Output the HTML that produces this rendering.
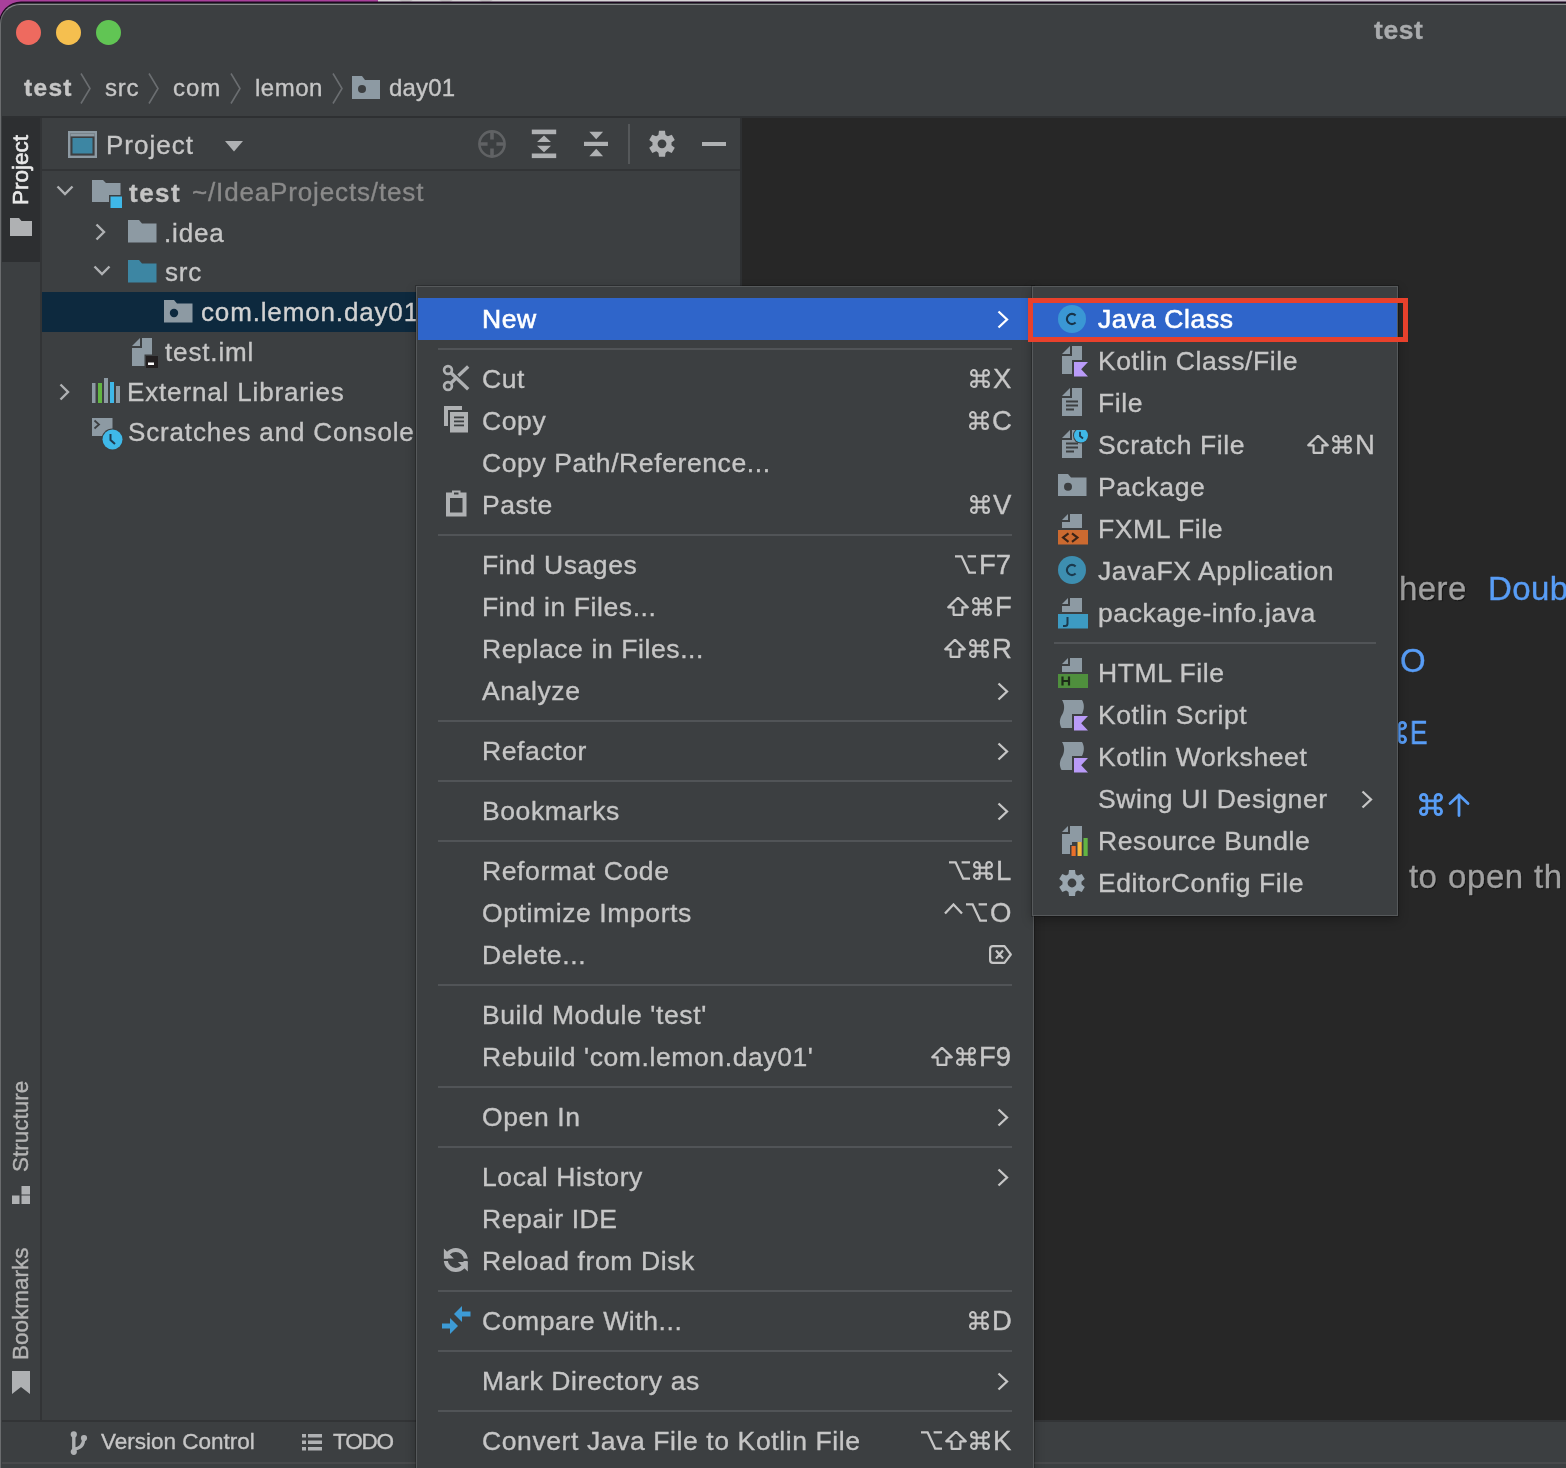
<!DOCTYPE html>
<html><head><meta charset="utf-8"><style>
html,body{margin:0;padding:0;width:1566px;height:1468px;overflow:hidden;background:#3c3f41}
.t{position:absolute;white-space:nowrap;font-family:"Liberation Sans", sans-serif;-webkit-text-stroke:0.35px currentColor;will-change:transform}
.r{position:absolute;display:block}
</style></head><body>
<div class="r" style="left:0px;top:0px;width:378px;height:40px;background:#a8409b;"></div><div class="r" style="left:378px;top:0px;width:912px;height:6px;background:#d9d5d8;"></div><div class="r" style="left:397px;top:-15px;width:18px;height:18px;border-radius:50%;background:#c2bec1"></div><div class="r" style="left:437px;top:-15px;width:18px;height:18px;border-radius:50%;background:#c2bec1"></div><div class="r" style="left:477px;top:-15px;width:18px;height:18px;border-radius:50%;background:#c2bec1"></div><div class="r" style="left:1290px;top:0px;width:276px;height:6px;background:#c8bccb;"></div><div class="r" style="left:0;top:3px;width:1620px;height:1500px;background:#3c3f41;border-radius:21px 0 0 0;box-shadow:0 -0.5px 0 1px #1d0a20"></div><div class="r" style="left:0;top:4px;width:1620px;height:1500px;box-sizing:border-box;border-radius:20px 0 0 0;border-top:1.6px solid #8d8f91;border-left:1.8px solid #6a6c6e"></div><div class="r" style="left:15.5px;top:19.799999999999997px;width:25px;height:25px;border-radius:50%;background:#ee6a5f"></div><div class="r" style="left:55.5px;top:19.799999999999997px;width:25px;height:25px;border-radius:50%;background:#f5bf4f"></div><div class="r" style="left:95.5px;top:19.799999999999997px;width:25px;height:25px;border-radius:50%;background:#61c554"></div><div class="t" style="left:1374px;top:17.27px;font-size:26.5px;line-height:26.5px;color:#a9abad;font-weight:bold;letter-spacing:0.6px;">test</div><div class="t" style="left:24px;top:76.06px;font-size:24.5px;line-height:24.5px;color:#c6c6c6;font-weight:bold;letter-spacing:1.3px;">test</div><div class="t" style="left:104.5px;top:76.48px;font-size:24px;line-height:24px;color:#c6c6c6;font-weight:normal;letter-spacing:0.8px;">src</div><div class="t" style="left:172.5px;top:76.48px;font-size:24px;line-height:24px;color:#c6c6c6;font-weight:normal;letter-spacing:1.0px;">com</div><div class="t" style="left:255px;top:76.48px;font-size:24px;line-height:24px;color:#c6c6c6;font-weight:normal;letter-spacing:0.5px;">lemon</div><div class="t" style="left:388.5px;top:76.48px;font-size:24px;line-height:24px;color:#c6c6c6;font-weight:normal;letter-spacing:0.15px;">day01</div><svg class="r" style="left:80px;top:73px;" width="11" height="31" viewBox="0 0 11 31"><path d="M1 0.5 L10 15.5 L1 30.5" fill="none" stroke="#6b6e71" stroke-width="1.6"/></svg><svg class="r" style="left:148px;top:73px;" width="11" height="31" viewBox="0 0 11 31"><path d="M1 0.5 L10 15.5 L1 30.5" fill="none" stroke="#6b6e71" stroke-width="1.6"/></svg><svg class="r" style="left:230px;top:73px;" width="11" height="31" viewBox="0 0 11 31"><path d="M1 0.5 L10 15.5 L1 30.5" fill="none" stroke="#6b6e71" stroke-width="1.6"/></svg><svg class="r" style="left:332px;top:73px;" width="11" height="31" viewBox="0 0 11 31"><path d="M1 0.5 L10 15.5 L1 30.5" fill="none" stroke="#6b6e71" stroke-width="1.6"/></svg><svg class="r" style="left:352px;top:76px;" width="28" height="23" viewBox="0 0 28 23"><path d="M0 0 H10 L13 4 H28 V23 H0 Z" fill="#8d9aa3"/><circle cx="10" cy="13" r="4" fill="#3c3f41"/></svg><div class="r" style="left:2px;top:116px;width:1564px;height:2px;background:#2e3032;"></div><div class="r" style="left:2px;top:118px;width:38px;height:1302px;background:#3c3f41;"></div><div class="r" style="left:2px;top:118px;width:38px;height:144px;background:#2d2f31;"></div><div class="r" style="left:40px;top:118px;width:2px;height:1302px;background:#323436;"></div><div class="r" style="left:42px;top:118px;width:700px;height:1302px;background:#3c3f41;"></div><div class="r" style="left:42px;top:169px;width:700px;height:2px;background:#323436;"></div><div class="r" style="left:740px;top:118px;width:2px;height:1302px;background:#2e3032;"></div><div class="r" style="left:742px;top:118px;width:824px;height:1302px;background:#272727;"></div><div class="r" style="left:2px;top:1420px;width:1564px;height:2px;background:#323436;"></div><div class="r" style="left:2px;top:1422px;width:1564px;height:40px;background:#3c3f41;"></div><div class="r" style="left:2px;top:1462px;width:1564px;height:2px;background:#48494b;"></div><div class="r" style="left:2px;top:1464px;width:1564px;height:4px;background:#3c3f41;"></div><div class="t" style="left:9.5px;top:205px;font-size:22.5px;line-height:22.5px;color:#e8e8e8;-webkit-text-stroke:0.6px #e8e8e8;transform-origin:0 0;transform:rotate(-90deg)">Project</div><svg class="r" style="left:10px;top:218px;" width="22" height="18" viewBox="0 0 22 18"><path d="M0 0 H9 L11.5 3 H22 V18 H0 Z" fill="#afb1b3"/></svg><div class="t" style="left:9.5px;top:1172px;font-size:22.5px;line-height:22.5px;color:#b4b4b4;transform-origin:0 0;transform:rotate(-90deg)">Structure</div><svg class="r" style="left:12px;top:1186px;" width="18" height="18" viewBox="0 0 18 18"><rect x="0" y="9.5" width="7.5" height="8.5" fill="#afb1b3"/><rect x="9.5" y="0" width="8.5" height="8.5" fill="#afb1b3"/><rect x="9.5" y="9.5" width="8.5" height="8.5" fill="#afb1b3"/></svg><div class="t" style="left:9.5px;top:1360px;font-size:22.5px;line-height:22.5px;color:#b4b4b4;transform-origin:0 0;transform:rotate(-90deg)">Bookmarks</div><svg class="r" style="left:12px;top:1371px;" width="18" height="24" viewBox="0 0 18 24"><path d="M0 0 H18 V23 L9 16 L0 23 Z" fill="#afb1b3"/></svg><svg class="r" style="left:70px;top:1431px;" width="20" height="25" viewBox="0 0 20 25"><circle cx="3.8" cy="3.4" r="3.1" fill="#afb1b3"/><circle cx="3.8" cy="20.8" r="3.1" fill="#afb1b3"/><circle cx="14" cy="7" r="3.1" fill="#afb1b3"/><path d="M3.8 3.5 V21" fill="none" stroke="#afb1b3" stroke-width="3.4"/><path d="M13.6 8 C13.6 15.5 9.5 17.6 3.8 18" fill="none" stroke="#afb1b3" stroke-width="3.2"/></svg><div class="t" style="left:100.5px;top:1430.95px;font-size:22.5px;line-height:22.5px;color:#c6c6c6;font-weight:normal;">Version Control</div><svg class="r" style="left:302px;top:1434px;" width="20" height="17" viewBox="0 0 20 17"><rect x="0" y="0" width="4" height="3.5" fill="#afb1b3"/><rect x="6" y="0" width="14" height="3.5" fill="#afb1b3"/><rect x="0" y="6.5" width="4" height="3.5" fill="#afb1b3"/><rect x="6" y="6.5" width="14" height="3.5" fill="#afb1b3"/><rect x="0" y="13" width="4" height="3.5" fill="#afb1b3"/><rect x="6" y="13" width="14" height="3.5" fill="#afb1b3"/></svg><div class="t" style="left:332.5px;top:1430.95px;font-size:22.5px;line-height:22.5px;color:#c6c6c6;font-weight:normal;letter-spacing:-1.2px;">TODO</div><svg class="r" style="left:68px;top:131px;" width="29" height="27" viewBox="0 0 29 27"><rect x="1.2" y="1.2" width="26.6" height="24.6" fill="none" stroke="#8d9aa3" stroke-width="2.4"/><rect x="2.4" y="2.4" width="24.2" height="3" fill="#8d9aa3"/><rect x="4.5" y="7" width="20" height="15.5" fill="#3d86a3"/></svg><div class="t" style="left:106px;top:131.99px;font-size:26px;line-height:26px;color:#c6c6c6;font-weight:normal;letter-spacing:1.0px;">Project</div><svg class="r" style="left:225px;top:141px;" width="18" height="11" viewBox="0 0 18 11"><path d="M0 0 H18 L9 10.5 Z" fill="#afb1b3"/></svg><svg class="r" style="left:476px;top:128px;" width="32" height="32" viewBox="0 0 32 32"><circle cx="16" cy="16" r="12.6" fill="none" stroke="#606264" stroke-width="2.6"/><path d="M16 3 V11.6 M16 20.4 V29 M3 16 H11.6 M20.4 16 H29" stroke="#606264" stroke-width="3.6"/></svg><svg class="r" style="left:531px;top:129px;" width="26" height="30" viewBox="0 0 26 30"><rect x="0.8" y="0.6" width="24.4" height="4.6" fill="#afb1b3"/><rect x="0.8" y="24.5" width="24.4" height="4.6" fill="#afb1b3"/><path d="M13 6.6 L20 13 H6 Z M6 16.8 H20 L13 23.2 Z" fill="#afb1b3"/></svg><svg class="r" style="left:583px;top:129px;" width="27" height="30" viewBox="0 0 27 30"><path d="M6.3 2.7 H20.1 L13.2 10.2 Z M13.2 19.7 L20.1 27.2 H6.3 Z" fill="#afb1b3"/><rect x="1" y="12.8" width="24" height="4.2" fill="#afb1b3"/></svg><div class="r" style="left:628px;top:124px;width:2px;height:40px;background:#55585a;"></div><svg class="r" style="left:648px;top:130px;" width="28" height="28" viewBox="0 0 28 28"><circle cx="14" cy="13.8" r="9.6" fill="#afb1b3"/><path d="M17.70 6.20 L17.00 0.80 L11.00 0.80 L10.30 6.20Z" fill="#afb1b3"/><path d="M22.43 13.20 L26.76 9.90 L23.76 4.70 L18.73 6.80Z" fill="#afb1b3"/><path d="M18.73 20.80 L23.76 22.90 L26.76 17.70 L22.43 14.40Z" fill="#afb1b3"/><path d="M10.30 21.40 L11.00 26.80 L17.00 26.80 L17.70 21.40Z" fill="#afb1b3"/><path d="M5.57 14.40 L1.24 17.70 L4.24 22.90 L9.27 20.80Z" fill="#afb1b3"/><path d="M9.27 6.80 L4.24 4.70 L1.24 9.90 L5.57 13.20Z" fill="#afb1b3"/><circle cx="14" cy="13.8" r="4.4" fill="#3c3f41"/></svg><div class="r" style="left:702px;top:142px;width:24px;height:4px;background:#afb1b3;"></div><div class="r" style="left:42px;top:292px;width:376px;height:40px;background:#0d293e;"></div><svg class="r" style="left:56px;top:185px;" width="18" height="11" viewBox="0 0 18 11"><path d="M1.5 1.5 L9 9 L16.5 1.5" fill="none" stroke="#afb1b3" stroke-width="2.4"/></svg><svg class="r" style="left:92px;top:180px;" width="31" height="29" viewBox="0 0 31 29"><path d="M0 0 H11 L14 3 H28.5 V22 H0 Z" fill="#8d9aa3"/><rect x="17" y="15" width="14" height="14" fill="#3c3f41"/><rect x="18.5" y="16.5" width="11.5" height="11.5" fill="#3fb8e8"/></svg><div class="t" style="left:128.5px;top:179.79px;font-size:26px;line-height:26px;color:#c4c4c4;font-weight:bold;letter-spacing:1.5px;">test</div><div class="t" style="left:192px;top:179.49px;font-size:26px;line-height:26px;color:#8a8a8a;font-weight:normal;letter-spacing:0.85px;">~/IdeaProjects/test</div><svg class="r" style="left:95px;top:223px;" width="11" height="18" viewBox="0 0 11 18"><path d="M1.5 1.5 L9 9 L1.5 16.5" fill="none" stroke="#afb1b3" stroke-width="2.4"/></svg><svg class="r" style="left:128px;top:220px;" width="29" height="23" viewBox="0 0 29 23"><path d="M0 0 H11 L14 3.5 H28.5 V22.5 H0 Z" fill="#8d9aa3"/></svg><div class="t" style="left:163.5px;top:219.69px;font-size:26px;line-height:26px;color:#c6c6c6;font-weight:normal;letter-spacing:0.85px;">.idea</div><svg class="r" style="left:92.5px;top:265px;" width="18" height="11" viewBox="0 0 18 11"><path d="M1.5 1.5 L9 9 L16.5 1.5" fill="none" stroke="#afb1b3" stroke-width="2.4"/></svg><svg class="r" style="left:128px;top:260px;" width="29" height="23" viewBox="0 0 29 23"><path d="M0 0 H11 L14 3.5 H28.5 V22.5 H0 Z" fill="#3d86a3"/></svg><div class="t" style="left:165px;top:259.29px;font-size:26px;line-height:26px;color:#c6c6c6;font-weight:normal;letter-spacing:0.85px;">src</div><svg class="r" style="left:164px;top:300px;" width="29" height="23" viewBox="0 0 29 23"><path d="M0 0 H10 L13 3.5 H28.5 V22.5 H0 Z" fill="#8d9aa3"/><circle cx="10" cy="13" r="4.2" fill="#0d293e"/></svg><div class="t" style="left:200.5px;top:299.29px;font-size:26px;line-height:26px;color:#d2d2d2;font-weight:normal;letter-spacing:0.85px;">com.lemon.day01</div><svg class="r" style="left:132px;top:338px;" width="28" height="31" viewBox="0 0 28 31"><path d="M10 0 H20 V28 H0 V10 H10 Z" fill="#8d9aa3"/><path d="M0 8 L8 0 V8 Z" fill="#8d9aa3"/><rect x="12.5" y="16.5" width="15" height="14.5" fill="#3c3f41"/><rect x="14" y="18" width="12" height="12" fill="#231f20"/><rect x="16" y="24.5" width="6" height="2.5" fill="#ffffff"/></svg><div class="t" style="left:164.5px;top:339.49px;font-size:26px;line-height:26px;color:#c6c6c6;font-weight:normal;letter-spacing:0.85px;">test.iml</div><svg class="r" style="left:59px;top:383px;" width="11" height="18" viewBox="0 0 11 18"><path d="M1.5 1.5 L9 9 L1.5 16.5" fill="none" stroke="#afb1b3" stroke-width="2.4"/></svg><svg class="r" style="left:92px;top:378px;" width="29" height="25" viewBox="0 0 29 25"><rect x="0" y="5" width="3.5" height="20" fill="#8d9aa3"/><rect x="6" y="5" width="4" height="20" fill="#62b543"/><rect x="12" y="0" width="4" height="25" fill="#8d9aa3"/><rect x="18" y="4" width="4" height="21" fill="#3fb8e8"/><rect x="24" y="8" width="4" height="17" fill="#8d9aa3"/></svg><div class="t" style="left:127px;top:379.49px;font-size:26px;line-height:26px;color:#c6c6c6;font-weight:normal;letter-spacing:0.85px;">External Libraries</div><svg class="r" style="left:92px;top:417px;" width="32" height="34" viewBox="0 0 32 34"><rect x="0" y="1" width="20.5" height="18" fill="#8d9aa3"/><path d="M2.5 3.5 L7 7.5 L2.5 11.5" fill="none" stroke="#3c3f41" stroke-width="1.8"/><circle cx="20.5" cy="22.5" r="11" fill="#3c3f41"/><circle cx="20.5" cy="22.5" r="10" fill="#3fb8e8"/><path d="M18.5 17 V23 L23 27" fill="none" stroke="#1e3a4f" stroke-width="2"/></svg><div class="t" style="left:128px;top:419.29px;font-size:26px;line-height:26px;color:#c6c6c6;font-weight:normal;letter-spacing:0.85px;">Scratches and Console</div><div class="t" style="left:1399px;top:572.07px;font-size:33px;line-height:33px;color:#a0a0a0;font-weight:normal;letter-spacing:0.4px;text-shadow:1px 1px 1px #111">here</div><div class="t" style="left:1487.5px;top:572.07px;font-size:33px;line-height:33px;color:#589df6;font-weight:normal;letter-spacing:0.4px;">Double</div><div class="t" style="left:1400px;top:644.07px;font-size:33px;line-height:33px;color:#589df6;font-weight:normal;">O</div><div class="t" style="left:1410px;top:716.07px;font-size:33px;line-height:33px;color:#589df6;font-weight:normal;transform:scaleX(0.8);transform-origin:0 0">E</div><div class="t" style="left:1408.5px;top:860.07px;font-size:33px;line-height:33px;color:#a0a0a0;font-weight:normal;letter-spacing:0.4px;text-shadow:1px 1px 1px #111">to</div><div class="t" style="left:1448px;top:860.07px;font-size:33px;line-height:33px;color:#a0a0a0;font-weight:normal;letter-spacing:0.6px;text-shadow:1px 1px 1px #111">open</div><div class="t" style="left:1534px;top:860.07px;font-size:33px;line-height:33px;color:#a0a0a0;font-weight:normal;letter-spacing:0.6px;text-shadow:1px 1px 1px #111">th</div><svg class="r" style="left:1382.5px;top:721px;" width="24" height="23" viewBox="0 0 24 23"><path d="M7.8 7.8 V4.6 A3.2 3.2 0 1 0 4.6 7.8 Z M16.2 7.8 V4.6 A3.2 3.2 0 1 1 19.4 7.8 Z M7.8 15.2 V18.4 A3.2 3.2 0 1 1 4.6 15.2 Z M16.2 15.2 V18.4 A3.2 3.2 0 1 0 19.4 15.2 Z M7.8 7.8 H16.2 V15.2 H7.8 Z" fill="none" stroke="#589df6" stroke-width="2.8"/></svg><svg class="r" style="left:1418.5px;top:792.5px;" width="24" height="23" viewBox="0 0 24 23"><path d="M7.8 7.8 V4.6 A3.2 3.2 0 1 0 4.6 7.8 Z M16.2 7.8 V4.6 A3.2 3.2 0 1 1 19.4 7.8 Z M7.8 15.2 V18.4 A3.2 3.2 0 1 1 4.6 15.2 Z M16.2 15.2 V18.4 A3.2 3.2 0 1 0 19.4 15.2 Z M7.8 7.8 H16.2 V15.2 H7.8 Z" fill="none" stroke="#589df6" stroke-width="2.8"/></svg><svg class="r" style="left:1447.5px;top:792.5px;" width="22" height="24" viewBox="0 0 22 24"><path d="M11 2 V22.5 M2 10.5 L11 2 L20 10.5" fill="none" stroke="#589df6" stroke-width="2.8" stroke-linecap="round" stroke-linejoin="round"/></svg><div class="r" style="left:416px;top:286px;width:618px;height:1200px;background:#3c3f41;box-sizing:border-box;border:1px solid #56595b;box-shadow:0 0 0 1px rgba(0,0,0,0.22),0 4px 10px rgba(0,0,0,0.28)"></div><div class="r" style="left:418px;top:298px;width:611px;height:42px;background:#2f65ca;"></div><div class="t" style="left:482px;top:306.07px;font-size:26.5px;line-height:26.5px;color:#ffffff;font-weight:normal;letter-spacing:0.6px;-webkit-text-stroke:0.6px #fff">New</div><svg class="r" style="left:997px;top:310px;" width="12" height="19" viewBox="0 0 12 19"><path d="M1.5 1.5 L10 9.5 L1.5 17.5" fill="none" stroke="#ffffff" stroke-width="2.3"/></svg><div class="r" style="left:438px;top:348px;width:574px;height:2px;background:#515457;"></div><div class="t" style="left:482px;top:366.07px;font-size:26.5px;line-height:26.5px;color:#c6c6c6;font-weight:normal;letter-spacing:0.6px;">Cut</div><div class="t" style="right:554.5px;top:365.22px;font-size:27.5px;line-height:27.5px;color:#c6c6c6"><svg width="20" height="19" viewBox="0 0 20 19" style="display:inline-block;vertical-align:baseline;margin-right:3px;position:relative;top:0px"><path d="M6.6499999999999995 6.6499999999999995 V3.8499999999999996 A2.8 2.8 0 1 0 3.8499999999999996 6.6499999999999995 Z M13.349999999999998 6.6499999999999995 V3.8499999999999996 A2.8 2.8 0 1 1 16.15 6.6499999999999995 Z M6.6499999999999995 12.350000000000001 V15.15 A2.8 2.8 0 1 1 3.8499999999999996 12.350000000000001 Z M13.349999999999998 12.350000000000001 V15.15 A2.8 2.8 0 1 0 16.15 12.350000000000001 Z M6.6499999999999995 6.6499999999999995 H13.349999999999998 V12.350000000000001 H6.6499999999999995 Z" fill="none" stroke="#c6c6c6" stroke-width="2.1"/></svg><span>X</span></div><svg class="r" style="left:436px;top:358px" width="40" height="34" viewBox="0 0 40 34"><circle cx="12" cy="12" r="3.9" fill="none" stroke="#afb1b3" stroke-width="2.7"/><circle cx="12" cy="28" r="3.9" fill="none" stroke="#afb1b3" stroke-width="2.7"/><path d="M14.6 14.6 L32.2 31.2" fill="none" stroke="#afb1b3" stroke-width="3.4"/><path d="M14.6 25.4 L19.6 20.6 M22.4 17.8 L32.2 8.6" fill="none" stroke="#afb1b3" stroke-width="3.4"/></svg><div class="t" style="left:482px;top:408.07px;font-size:26.5px;line-height:26.5px;color:#c6c6c6;font-weight:normal;letter-spacing:0.6px;">Copy</div><div class="t" style="right:554.5px;top:407.22px;font-size:27.5px;line-height:27.5px;color:#c6c6c6"><svg width="20" height="19" viewBox="0 0 20 19" style="display:inline-block;vertical-align:baseline;margin-right:3px;position:relative;top:0px"><path d="M6.6499999999999995 6.6499999999999995 V3.8499999999999996 A2.8 2.8 0 1 0 3.8499999999999996 6.6499999999999995 Z M13.349999999999998 6.6499999999999995 V3.8499999999999996 A2.8 2.8 0 1 1 16.15 6.6499999999999995 Z M6.6499999999999995 12.350000000000001 V15.15 A2.8 2.8 0 1 1 3.8499999999999996 12.350000000000001 Z M13.349999999999998 12.350000000000001 V15.15 A2.8 2.8 0 1 0 16.15 12.350000000000001 Z M6.6499999999999995 6.6499999999999995 H13.349999999999998 V12.350000000000001 H6.6499999999999995 Z" fill="none" stroke="#c6c6c6" stroke-width="2.1"/></svg><span>C</span></div><svg class="r" style="left:444px;top:406px" width="25" height="27" viewBox="0 0 25 27"><path d="M0 0 H18 V4 H4 V20 H0 Z" fill="#afb1b3"/><rect x="6" y="6" width="18" height="20.5" fill="#afb1b3"/><rect x="10" y="10.5" width="10" height="1.8" fill="#3c3f41"/><rect x="10" y="14.5" width="10" height="1.8" fill="#3c3f41"/><rect x="10" y="18.5" width="10" height="1.8" fill="#3c3f41"/></svg><div class="t" style="left:482px;top:450.07px;font-size:26.5px;line-height:26.5px;color:#c6c6c6;font-weight:normal;letter-spacing:0.6px;">Copy Path/Reference...</div><div class="t" style="left:482px;top:492.07px;font-size:26.5px;line-height:26.5px;color:#c6c6c6;font-weight:normal;letter-spacing:0.6px;">Paste</div><div class="t" style="right:554.5px;top:491.22px;font-size:27.5px;line-height:27.5px;color:#c6c6c6"><svg width="20" height="19" viewBox="0 0 20 19" style="display:inline-block;vertical-align:baseline;margin-right:3px;position:relative;top:0px"><path d="M6.6499999999999995 6.6499999999999995 V3.8499999999999996 A2.8 2.8 0 1 0 3.8499999999999996 6.6499999999999995 Z M13.349999999999998 6.6499999999999995 V3.8499999999999996 A2.8 2.8 0 1 1 16.15 6.6499999999999995 Z M6.6499999999999995 12.350000000000001 V15.15 A2.8 2.8 0 1 1 3.8499999999999996 12.350000000000001 Z M13.349999999999998 12.350000000000001 V15.15 A2.8 2.8 0 1 0 16.15 12.350000000000001 Z M6.6499999999999995 6.6499999999999995 H13.349999999999998 V12.350000000000001 H6.6499999999999995 Z" fill="none" stroke="#c6c6c6" stroke-width="2.1"/></svg><span>V</span></div><svg class="r" style="left:446px;top:489.5px" width="21" height="27" viewBox="0 0 21 27"><path d="M0 2.5 H6 V0.5 H14.5 V2.5 H20.5 V26.5 H0 Z M4 8 V22.5 H16.5 V8 Z M8 2.5 V4.5 H12.5 V2.5 Z" fill="#afb1b3" fill-rule="evenodd"/></svg><div class="r" style="left:438px;top:534px;width:574px;height:2px;background:#515457;"></div><div class="t" style="left:482px;top:552.07px;font-size:26.5px;line-height:26.5px;color:#c6c6c6;font-weight:normal;letter-spacing:0.6px;">Find Usages</div><div class="t" style="right:554.5px;top:551.22px;font-size:27.5px;line-height:27.5px;color:#c6c6c6"><svg width="21" height="19" viewBox="0 0 21 19" style="display:inline-block;vertical-align:baseline;margin-right:3px;position:relative;top:0px"><path d="M0 1.3 H6.6 L14.2 17.7 H21 M12.6 1.3 H21" fill="none" stroke="#c6c6c6" stroke-width="2.3"/></svg><span>F7</span></div><div class="t" style="left:482px;top:594.07px;font-size:26.5px;line-height:26.5px;color:#c6c6c6;font-weight:normal;letter-spacing:0.6px;">Find in Files...</div><div class="t" style="right:554.5px;top:593.22px;font-size:27.5px;line-height:27.5px;color:#c6c6c6"><svg width="22" height="19" viewBox="0 0 22 19" style="display:inline-block;vertical-align:baseline;margin-right:3px;position:relative;top:0px"><path d="M11 0.6 L20.8 10.3 H15.4 V17.8 H6.6 V10.3 H1.2 Z" fill="none" stroke="#c6c6c6" stroke-width="2.2" stroke-linejoin="round"/></svg><svg width="20" height="19" viewBox="0 0 20 19" style="display:inline-block;vertical-align:baseline;margin-right:3px;position:relative;top:0px"><path d="M6.6499999999999995 6.6499999999999995 V3.8499999999999996 A2.8 2.8 0 1 0 3.8499999999999996 6.6499999999999995 Z M13.349999999999998 6.6499999999999995 V3.8499999999999996 A2.8 2.8 0 1 1 16.15 6.6499999999999995 Z M6.6499999999999995 12.350000000000001 V15.15 A2.8 2.8 0 1 1 3.8499999999999996 12.350000000000001 Z M13.349999999999998 12.350000000000001 V15.15 A2.8 2.8 0 1 0 16.15 12.350000000000001 Z M6.6499999999999995 6.6499999999999995 H13.349999999999998 V12.350000000000001 H6.6499999999999995 Z" fill="none" stroke="#c6c6c6" stroke-width="2.1"/></svg><span>F</span></div><div class="t" style="left:482px;top:636.07px;font-size:26.5px;line-height:26.5px;color:#c6c6c6;font-weight:normal;letter-spacing:0.6px;">Replace in Files...</div><div class="t" style="right:554.5px;top:635.22px;font-size:27.5px;line-height:27.5px;color:#c6c6c6"><svg width="22" height="19" viewBox="0 0 22 19" style="display:inline-block;vertical-align:baseline;margin-right:3px;position:relative;top:0px"><path d="M11 0.6 L20.8 10.3 H15.4 V17.8 H6.6 V10.3 H1.2 Z" fill="none" stroke="#c6c6c6" stroke-width="2.2" stroke-linejoin="round"/></svg><svg width="20" height="19" viewBox="0 0 20 19" style="display:inline-block;vertical-align:baseline;margin-right:3px;position:relative;top:0px"><path d="M6.6499999999999995 6.6499999999999995 V3.8499999999999996 A2.8 2.8 0 1 0 3.8499999999999996 6.6499999999999995 Z M13.349999999999998 6.6499999999999995 V3.8499999999999996 A2.8 2.8 0 1 1 16.15 6.6499999999999995 Z M6.6499999999999995 12.350000000000001 V15.15 A2.8 2.8 0 1 1 3.8499999999999996 12.350000000000001 Z M13.349999999999998 12.350000000000001 V15.15 A2.8 2.8 0 1 0 16.15 12.350000000000001 Z M6.6499999999999995 6.6499999999999995 H13.349999999999998 V12.350000000000001 H6.6499999999999995 Z" fill="none" stroke="#c6c6c6" stroke-width="2.1"/></svg><span>R</span></div><div class="t" style="left:482px;top:678.07px;font-size:26.5px;line-height:26.5px;color:#c6c6c6;font-weight:normal;letter-spacing:0.6px;">Analyze</div><svg class="r" style="left:997px;top:682px;" width="12" height="19" viewBox="0 0 12 19"><path d="M1.5 1.5 L10 9.5 L1.5 17.5" fill="none" stroke="#c6c6c6" stroke-width="2.3"/></svg><div class="r" style="left:438px;top:720px;width:574px;height:2px;background:#515457;"></div><div class="t" style="left:482px;top:738.07px;font-size:26.5px;line-height:26.5px;color:#c6c6c6;font-weight:normal;letter-spacing:0.6px;">Refactor</div><svg class="r" style="left:997px;top:742px;" width="12" height="19" viewBox="0 0 12 19"><path d="M1.5 1.5 L10 9.5 L1.5 17.5" fill="none" stroke="#c6c6c6" stroke-width="2.3"/></svg><div class="r" style="left:438px;top:780px;width:574px;height:2px;background:#515457;"></div><div class="t" style="left:482px;top:798.07px;font-size:26.5px;line-height:26.5px;color:#c6c6c6;font-weight:normal;letter-spacing:0.6px;">Bookmarks</div><svg class="r" style="left:997px;top:802px;" width="12" height="19" viewBox="0 0 12 19"><path d="M1.5 1.5 L10 9.5 L1.5 17.5" fill="none" stroke="#c6c6c6" stroke-width="2.3"/></svg><div class="r" style="left:438px;top:840px;width:574px;height:2px;background:#515457;"></div><div class="t" style="left:482px;top:858.07px;font-size:26.5px;line-height:26.5px;color:#c6c6c6;font-weight:normal;letter-spacing:0.6px;">Reformat Code</div><div class="t" style="right:554.5px;top:857.22px;font-size:27.5px;line-height:27.5px;color:#c6c6c6"><svg width="21" height="19" viewBox="0 0 21 19" style="display:inline-block;vertical-align:baseline;margin-right:3px;position:relative;top:0px"><path d="M0 1.3 H6.6 L14.2 17.7 H21 M12.6 1.3 H21" fill="none" stroke="#c6c6c6" stroke-width="2.3"/></svg><svg width="20" height="19" viewBox="0 0 20 19" style="display:inline-block;vertical-align:baseline;margin-right:3px;position:relative;top:0px"><path d="M6.6499999999999995 6.6499999999999995 V3.8499999999999996 A2.8 2.8 0 1 0 3.8499999999999996 6.6499999999999995 Z M13.349999999999998 6.6499999999999995 V3.8499999999999996 A2.8 2.8 0 1 1 16.15 6.6499999999999995 Z M6.6499999999999995 12.350000000000001 V15.15 A2.8 2.8 0 1 1 3.8499999999999996 12.350000000000001 Z M13.349999999999998 12.350000000000001 V15.15 A2.8 2.8 0 1 0 16.15 12.350000000000001 Z M6.6499999999999995 6.6499999999999995 H13.349999999999998 V12.350000000000001 H6.6499999999999995 Z" fill="none" stroke="#c6c6c6" stroke-width="2.1"/></svg><span>L</span></div><div class="t" style="left:482px;top:900.07px;font-size:26.5px;line-height:26.5px;color:#c6c6c6;font-weight:normal;letter-spacing:0.6px;">Optimize Imports</div><div class="t" style="right:554.5px;top:899.22px;font-size:27.5px;line-height:27.5px;color:#c6c6c6"><svg width="19" height="19" viewBox="0 0 19 19" style="display:inline-block;vertical-align:baseline;margin-right:3px;position:relative;top:0px"><path d="M1 10.5 L9.5 1.5 L18 10.5" fill="none" stroke="#c6c6c6" stroke-width="2.3"/></svg><svg width="21" height="19" viewBox="0 0 21 19" style="display:inline-block;vertical-align:baseline;margin-right:3px;position:relative;top:0px"><path d="M0 1.3 H6.6 L14.2 17.7 H21 M12.6 1.3 H21" fill="none" stroke="#c6c6c6" stroke-width="2.3"/></svg><span>O</span></div><div class="t" style="left:482px;top:942.07px;font-size:26.5px;line-height:26.5px;color:#c6c6c6;font-weight:normal;letter-spacing:0.6px;">Delete...</div><div class="t" style="right:554.5px;top:941.22px;font-size:27.5px;line-height:27.5px;color:#c6c6c6"><svg width="23" height="19" viewBox="0 0 23 19" style="display:inline-block;vertical-align:baseline;margin-right:0px;position:relative;top:0px"><path d="M4 1.1 H15.5 L21.8 9.5 L15.5 17.9 H4 Q1.1 17.9 1.1 15 V4 Q1.1 1.1 4 1.1 Z M7 5.5 L14 13.5 M14 5.5 L7 13.5" fill="none" stroke="#c6c6c6" stroke-width="2.2" stroke-linejoin="round"/></svg></div><div class="r" style="left:438px;top:984px;width:574px;height:2px;background:#515457;"></div><div class="t" style="left:482px;top:1002.07px;font-size:26.5px;line-height:26.5px;color:#c6c6c6;font-weight:normal;letter-spacing:0.6px;">Build Module 'test'</div><div class="t" style="left:482px;top:1044.07px;font-size:26.5px;line-height:26.5px;color:#c6c6c6;font-weight:normal;letter-spacing:0.6px;">Rebuild 'com.lemon.day01'</div><div class="t" style="right:554.5px;top:1043.22px;font-size:27.5px;line-height:27.5px;color:#c6c6c6"><svg width="22" height="19" viewBox="0 0 22 19" style="display:inline-block;vertical-align:baseline;margin-right:3px;position:relative;top:0px"><path d="M11 0.6 L20.8 10.3 H15.4 V17.8 H6.6 V10.3 H1.2 Z" fill="none" stroke="#c6c6c6" stroke-width="2.2" stroke-linejoin="round"/></svg><svg width="20" height="19" viewBox="0 0 20 19" style="display:inline-block;vertical-align:baseline;margin-right:3px;position:relative;top:0px"><path d="M6.6499999999999995 6.6499999999999995 V3.8499999999999996 A2.8 2.8 0 1 0 3.8499999999999996 6.6499999999999995 Z M13.349999999999998 6.6499999999999995 V3.8499999999999996 A2.8 2.8 0 1 1 16.15 6.6499999999999995 Z M6.6499999999999995 12.350000000000001 V15.15 A2.8 2.8 0 1 1 3.8499999999999996 12.350000000000001 Z M13.349999999999998 12.350000000000001 V15.15 A2.8 2.8 0 1 0 16.15 12.350000000000001 Z M6.6499999999999995 6.6499999999999995 H13.349999999999998 V12.350000000000001 H6.6499999999999995 Z" fill="none" stroke="#c6c6c6" stroke-width="2.1"/></svg><span>F9</span></div><div class="r" style="left:438px;top:1086px;width:574px;height:2px;background:#515457;"></div><div class="t" style="left:482px;top:1104.07px;font-size:26.5px;line-height:26.5px;color:#c6c6c6;font-weight:normal;letter-spacing:0.6px;">Open In</div><svg class="r" style="left:997px;top:1108px;" width="12" height="19" viewBox="0 0 12 19"><path d="M1.5 1.5 L10 9.5 L1.5 17.5" fill="none" stroke="#c6c6c6" stroke-width="2.3"/></svg><div class="r" style="left:438px;top:1146px;width:574px;height:2px;background:#515457;"></div><div class="t" style="left:482px;top:1164.07px;font-size:26.5px;line-height:26.5px;color:#c6c6c6;font-weight:normal;letter-spacing:0.6px;">Local History</div><svg class="r" style="left:997px;top:1168px;" width="12" height="19" viewBox="0 0 12 19"><path d="M1.5 1.5 L10 9.5 L1.5 17.5" fill="none" stroke="#c6c6c6" stroke-width="2.3"/></svg><div class="t" style="left:482px;top:1206.07px;font-size:26.5px;line-height:26.5px;color:#c6c6c6;font-weight:normal;letter-spacing:0.6px;">Repair IDE</div><div class="t" style="left:482px;top:1248.07px;font-size:26.5px;line-height:26.5px;color:#c6c6c6;font-weight:normal;letter-spacing:0.6px;">Reload from Disk</div><svg class="r" style="left:438px;top:1242px" width="36" height="36" viewBox="0 0 36 36"><circle cx="17.8" cy="17.9" r="10" fill="none" stroke="#afb1b3" stroke-width="4"/><rect x="0" y="16.6" width="36" height="2.4" fill="#3c3f41"/><path d="M5.9 6.6 V16.6 H15.9 Z" fill="#afb1b3"/><path d="M29.8 19.9 H19.9 L29.8 29.6 Z" fill="#afb1b3"/></svg><div class="r" style="left:438px;top:1290px;width:574px;height:2px;background:#515457;"></div><div class="t" style="left:482px;top:1308.07px;font-size:26.5px;line-height:26.5px;color:#c6c6c6;font-weight:normal;letter-spacing:0.6px;">Compare With...</div><div class="t" style="right:554.5px;top:1307.22px;font-size:27.5px;line-height:27.5px;color:#c6c6c6"><svg width="20" height="19" viewBox="0 0 20 19" style="display:inline-block;vertical-align:baseline;margin-right:3px;position:relative;top:0px"><path d="M6.6499999999999995 6.6499999999999995 V3.8499999999999996 A2.8 2.8 0 1 0 3.8499999999999996 6.6499999999999995 Z M13.349999999999998 6.6499999999999995 V3.8499999999999996 A2.8 2.8 0 1 1 16.15 6.6499999999999995 Z M6.6499999999999995 12.350000000000001 V15.15 A2.8 2.8 0 1 1 3.8499999999999996 12.350000000000001 Z M13.349999999999998 12.350000000000001 V15.15 A2.8 2.8 0 1 0 16.15 12.350000000000001 Z M6.6499999999999995 6.6499999999999995 H13.349999999999998 V12.350000000000001 H6.6499999999999995 Z" fill="none" stroke="#c6c6c6" stroke-width="2.1"/></svg><span>D</span></div><svg class="r" style="left:442px;top:1306px" width="29" height="29" viewBox="0 0 29 29"><path d="M12 8 L20 0 V5.5 H28.5 V10.5 H20 V16 Z" fill="#3d9bd6"/><path d="M16 20 L8 12 V17.5 H0 V22.5 H8 V28 Z" fill="#3d9bd6"/></svg><div class="r" style="left:438px;top:1350px;width:574px;height:2px;background:#515457;"></div><div class="t" style="left:482px;top:1368.07px;font-size:26.5px;line-height:26.5px;color:#c6c6c6;font-weight:normal;letter-spacing:0.6px;">Mark Directory as</div><svg class="r" style="left:997px;top:1372px;" width="12" height="19" viewBox="0 0 12 19"><path d="M1.5 1.5 L10 9.5 L1.5 17.5" fill="none" stroke="#c6c6c6" stroke-width="2.3"/></svg><div class="r" style="left:438px;top:1410px;width:574px;height:2px;background:#515457;"></div><div class="t" style="left:482px;top:1428.07px;font-size:26.5px;line-height:26.5px;color:#c6c6c6;font-weight:normal;letter-spacing:0.6px;">Convert Java File to Kotlin File</div><div class="t" style="right:554.5px;top:1427.22px;font-size:27.5px;line-height:27.5px;color:#c6c6c6"><svg width="21" height="19" viewBox="0 0 21 19" style="display:inline-block;vertical-align:baseline;margin-right:3px;position:relative;top:0px"><path d="M0 1.3 H6.6 L14.2 17.7 H21 M12.6 1.3 H21" fill="none" stroke="#c6c6c6" stroke-width="2.3"/></svg><svg width="22" height="19" viewBox="0 0 22 19" style="display:inline-block;vertical-align:baseline;margin-right:3px;position:relative;top:0px"><path d="M11 0.6 L20.8 10.3 H15.4 V17.8 H6.6 V10.3 H1.2 Z" fill="none" stroke="#c6c6c6" stroke-width="2.2" stroke-linejoin="round"/></svg><svg width="20" height="19" viewBox="0 0 20 19" style="display:inline-block;vertical-align:baseline;margin-right:3px;position:relative;top:0px"><path d="M6.6499999999999995 6.6499999999999995 V3.8499999999999996 A2.8 2.8 0 1 0 3.8499999999999996 6.6499999999999995 Z M13.349999999999998 6.6499999999999995 V3.8499999999999996 A2.8 2.8 0 1 1 16.15 6.6499999999999995 Z M6.6499999999999995 12.350000000000001 V15.15 A2.8 2.8 0 1 1 3.8499999999999996 12.350000000000001 Z M13.349999999999998 12.350000000000001 V15.15 A2.8 2.8 0 1 0 16.15 12.350000000000001 Z M6.6499999999999995 6.6499999999999995 H13.349999999999998 V12.350000000000001 H6.6499999999999995 Z" fill="none" stroke="#c6c6c6" stroke-width="2.1"/></svg><span>K</span></div><div class="r" style="left:1032px;top:286px;width:366px;height:630px;background:#3c3f41;box-sizing:border-box;border:1px solid #56595b;box-shadow:0 0 0 1px rgba(0,0,0,0.22),0 4px 10px rgba(0,0,0,0.28)"></div><div class="r" style="left:1033px;top:298px;width:364px;height:42px;background:#2f65ca;"></div><div class="t" style="left:1098px;top:306.07px;font-size:26.5px;line-height:26.5px;color:#ffffff;font-weight:normal;letter-spacing:0.6px;-webkit-text-stroke:0.6px #fff">Java Class</div><svg class="r" style="left:1058px;top:305px;" width="31" height="31" viewBox="0 0 31 31"><circle cx="14" cy="14" r="14" fill="#3a97d4"/><path d="M17.6 10.4 A5.1 5.1 0 1 0 17.6 17.6" fill="none" stroke="#173349" stroke-width="2.1"/></svg><div class="t" style="left:1098px;top:348.07px;font-size:26.5px;line-height:26.5px;color:#c6c6c6;font-weight:normal;letter-spacing:0.6px;">Kotlin Class/File</div><svg class="r" style="left:1058px;top:346px;" width="31" height="31" viewBox="0 0 31 31"><path d="M14 0 H24 V14 H14 V28 H4 V10 H14 Z" fill="#8d9aa3"/><path d="M4 8 L12 0 V8 Z" fill="#8d9aa3"/><rect x="14" y="14" width="17" height="17" fill="#3c3f41"/><path d="M16 16 H30 L23.2 23.2 L30 30.5 H16 Z" fill="#b99bf8"/></svg><div class="t" style="left:1098px;top:390.07px;font-size:26.5px;line-height:26.5px;color:#c6c6c6;font-weight:normal;letter-spacing:0.6px;">File</div><svg class="r" style="left:1058px;top:388px;" width="31" height="31" viewBox="0 0 31 31"><g transform="translate(4 0)"><path d="M10 0 H20 V28 H0 V10 H10 Z" fill="#8d9aa3"/><path d="M0 8 L8 0 V8 Z" fill="#8d9aa3"/><rect x="4" y="12.5" width="12" height="2" fill="#3c3f41"/><rect x="4" y="16.5" width="12" height="2" fill="#3c3f41"/><rect x="4" y="20.5" width="8" height="2" fill="#3c3f41"/></g></svg><div class="t" style="left:1098px;top:432.07px;font-size:26.5px;line-height:26.5px;color:#c6c6c6;font-weight:normal;letter-spacing:0.6px;">Scratch File</div><svg class="r" style="left:1058px;top:430px;" width="31" height="31" viewBox="0 0 31 31"><g transform="translate(4 0)"><path d="M10 0 H20 V28 H0 V10 H10 Z" fill="#8d9aa3"/><path d="M0 8 L8 0 V8 Z" fill="#8d9aa3"/><rect x="4" y="12.5" width="12" height="2" fill="#3c3f41"/><rect x="4" y="16.5" width="12" height="2" fill="#3c3f41"/><rect x="4" y="20.5" width="8" height="2" fill="#3c3f41"/></g><circle cx="23" cy="5.5" r="8" fill="#3c3f41"/><circle cx="23" cy="5.5" r="7" fill="#3fb8e8"/><path d="M22 1.8 V6 L25 8.5" fill="none" stroke="#1e3a4f" stroke-width="1.8"/></svg><div class="t" style="right:191px;top:431.22px;font-size:27.5px;line-height:27.5px;color:#c6c6c6"><svg width="22" height="19" viewBox="0 0 22 19" style="display:inline-block;vertical-align:baseline;margin-right:3px;position:relative;top:0px"><path d="M11 0.6 L20.8 10.3 H15.4 V17.8 H6.6 V10.3 H1.2 Z" fill="none" stroke="#c6c6c6" stroke-width="2.2" stroke-linejoin="round"/></svg><svg width="20" height="19" viewBox="0 0 20 19" style="display:inline-block;vertical-align:baseline;margin-right:3px;position:relative;top:0px"><path d="M6.6499999999999995 6.6499999999999995 V3.8499999999999996 A2.8 2.8 0 1 0 3.8499999999999996 6.6499999999999995 Z M13.349999999999998 6.6499999999999995 V3.8499999999999996 A2.8 2.8 0 1 1 16.15 6.6499999999999995 Z M6.6499999999999995 12.350000000000001 V15.15 A2.8 2.8 0 1 1 3.8499999999999996 12.350000000000001 Z M13.349999999999998 12.350000000000001 V15.15 A2.8 2.8 0 1 0 16.15 12.350000000000001 Z M6.6499999999999995 6.6499999999999995 H13.349999999999998 V12.350000000000001 H6.6499999999999995 Z" fill="none" stroke="#c6c6c6" stroke-width="2.1"/></svg><span>N</span></div><div class="t" style="left:1098px;top:474.07px;font-size:26.5px;line-height:26.5px;color:#c6c6c6;font-weight:normal;letter-spacing:0.6px;">Package</div><svg class="r" style="left:1058px;top:474px;" width="31" height="31" viewBox="0 0 31 31"><path d="M0 0 H10 L13 3.5 H28.5 V22 H0 Z" fill="#8d9aa3"/><circle cx="10" cy="12.8" r="4" fill="#3c3f41"/></svg><div class="t" style="left:1098px;top:516.07px;font-size:26.5px;line-height:26.5px;color:#c6c6c6;font-weight:normal;letter-spacing:0.6px;">FXML File</div><svg class="r" style="left:1058px;top:514px;" width="31" height="31" viewBox="0 0 31 31"><path d="M12 0 H24 V14 H4 V8 H12 Z" fill="#8d9aa3"/><path d="M4 6 L10 0 V6 Z" fill="#8d9aa3"/><rect x="0" y="16" width="30" height="14.5" fill="#cc6a30"/><path d="M10.5 19.3 L5 23.6 L10.5 27.9 M14 19.3 L19.5 23.6 L14 27.9" fill="none" stroke="#3a2418" stroke-width="2.1"/></svg><div class="t" style="left:1098px;top:558.07px;font-size:26.5px;line-height:26.5px;color:#c6c6c6;font-weight:normal;letter-spacing:0.6px;">JavaFX Application</div><svg class="r" style="left:1058px;top:556px;" width="31" height="31" viewBox="0 0 31 31"><circle cx="14" cy="14" r="14" fill="#3d8eb0"/><path d="M17.6 10.4 A5.1 5.1 0 1 0 17.6 17.6" fill="none" stroke="#1b3a4e" stroke-width="2.1"/></svg><div class="t" style="left:1098px;top:600.07px;font-size:26.5px;line-height:26.5px;color:#c6c6c6;font-weight:normal;letter-spacing:0.6px;">package-info.java</div><svg class="r" style="left:1058px;top:598px;" width="31" height="31" viewBox="0 0 31 31"><path d="M12 0 H24 V14 H4 V8 H12 Z" fill="#8d9aa3"/><path d="M4 6 L10 0 V6 Z" fill="#8d9aa3"/><rect x="0" y="16" width="30" height="14.5" fill="#3d9bc3"/><path d="M9.5 19 V25.5 Q9.5 28 7 28 H5" fill="none" stroke="#1b3a4e" stroke-width="2"/></svg><div class="r" style="left:1054px;top:642px;width:322px;height:2px;background:#515457;"></div><div class="t" style="left:1098px;top:660.07px;font-size:26.5px;line-height:26.5px;color:#c6c6c6;font-weight:normal;letter-spacing:0.6px;">HTML File</div><svg class="r" style="left:1058px;top:658px;" width="31" height="31" viewBox="0 0 31 31"><path d="M12 0 H24 V14 H4 V8 H12 Z" fill="#8d9aa3"/><path d="M4 6 L10 0 V6 Z" fill="#8d9aa3"/><rect x="0" y="16" width="30" height="14" fill="#4f8f3d"/><path d="M4.5 18.5 V27.5 M11 18.5 V27.5 M4.5 23 H11" fill="none" stroke="#1d2b18" stroke-width="2.2"/></svg><div class="t" style="left:1098px;top:702.07px;font-size:26.5px;line-height:26.5px;color:#c6c6c6;font-weight:normal;letter-spacing:0.6px;">Kotlin Script</div><svg class="r" style="left:1058px;top:700px;" width="31" height="31" viewBox="0 0 31 31"><path d="M4 0 H24 C26.5 4 26.5 9 24 14 H14.5 V28 H3.5 C1 23 1.5 19 4.5 14 C7 9 6.5 4 4 0 Z" fill="#8d9aa3"/><rect x="14" y="14" width="17" height="17" fill="#3c3f41"/><path d="M16 16 H30 L23.2 23.2 L30 30.5 H16 Z" fill="#b99bf8"/></svg><div class="t" style="left:1098px;top:744.07px;font-size:26.5px;line-height:26.5px;color:#c6c6c6;font-weight:normal;letter-spacing:0.6px;">Kotlin Worksheet</div><svg class="r" style="left:1058px;top:742px;" width="31" height="31" viewBox="0 0 31 31"><path d="M4 0 H24 C26.5 4 26.5 9 24 14 H14.5 V28 H3.5 C1 23 1.5 19 4.5 14 C7 9 6.5 4 4 0 Z" fill="#8d9aa3"/><rect x="14" y="14" width="17" height="17" fill="#3c3f41"/><path d="M16 16 H30 L23.2 23.2 L30 30.5 H16 Z" fill="#b99bf8"/></svg><div class="t" style="left:1098px;top:786.07px;font-size:26.5px;line-height:26.5px;color:#c6c6c6;font-weight:normal;letter-spacing:0.6px;">Swing UI Designer</div><svg class="r" style="left:1361px;top:790px;" width="12" height="19" viewBox="0 0 12 19"><path d="M1.5 1.5 L10 9.5 L1.5 17.5" fill="none" stroke="#c6c6c6" stroke-width="2.3"/></svg><div class="t" style="left:1098px;top:828.07px;font-size:26.5px;line-height:26.5px;color:#c6c6c6;font-weight:normal;letter-spacing:0.6px;">Resource Bundle</div><svg class="r" style="left:1058px;top:826px;" width="31" height="31" viewBox="0 0 31 31"><path d="M12 0 H24 V16 H14 V28 H4 V8 H12 Z" fill="#8d9aa3"/><path d="M4 6 L10 0 V6 Z" fill="#8d9aa3"/><rect x="12" y="19" width="18" height="12" fill="#3c3f41"/><rect x="13.5" y="20" width="4.2" height="10" fill="#e9702a"/><rect x="19.5" y="16" width="4.2" height="14" fill="#f4b83f"/><rect x="25.5" y="12" width="4.2" height="18" fill="#62b543"/></svg><div class="t" style="left:1098px;top:870.07px;font-size:26.5px;line-height:26.5px;color:#c6c6c6;font-weight:normal;letter-spacing:0.6px;">EditorConfig File</div><svg class="r" style="left:1058px;top:869px;" width="28" height="28" viewBox="0 0 28 28"><circle cx="14" cy="14" r="9.6" fill="#9aa7b0"/><path d="M17.70 6.40 L17.00 1.00 L11.00 1.00 L10.30 6.40Z" fill="#9aa7b0"/><path d="M22.43 13.40 L26.76 10.10 L23.76 4.90 L18.73 7.00Z" fill="#9aa7b0"/><path d="M18.73 21.00 L23.76 23.10 L26.76 17.90 L22.43 14.60Z" fill="#9aa7b0"/><path d="M10.30 21.60 L11.00 27.00 L17.00 27.00 L17.70 21.60Z" fill="#9aa7b0"/><path d="M5.57 14.60 L1.24 17.90 L4.24 23.10 L9.27 21.00Z" fill="#9aa7b0"/><path d="M9.27 7.00 L4.24 4.90 L1.24 10.10 L5.57 13.40Z" fill="#9aa7b0"/><circle cx="14" cy="14" r="4.4" fill="#3c3f41"/></svg><div class="r" style="left:1028px;top:298px;width:380px;height:44px;box-sizing:border-box;border:5px solid #e8412c"></div>
</body></html>
